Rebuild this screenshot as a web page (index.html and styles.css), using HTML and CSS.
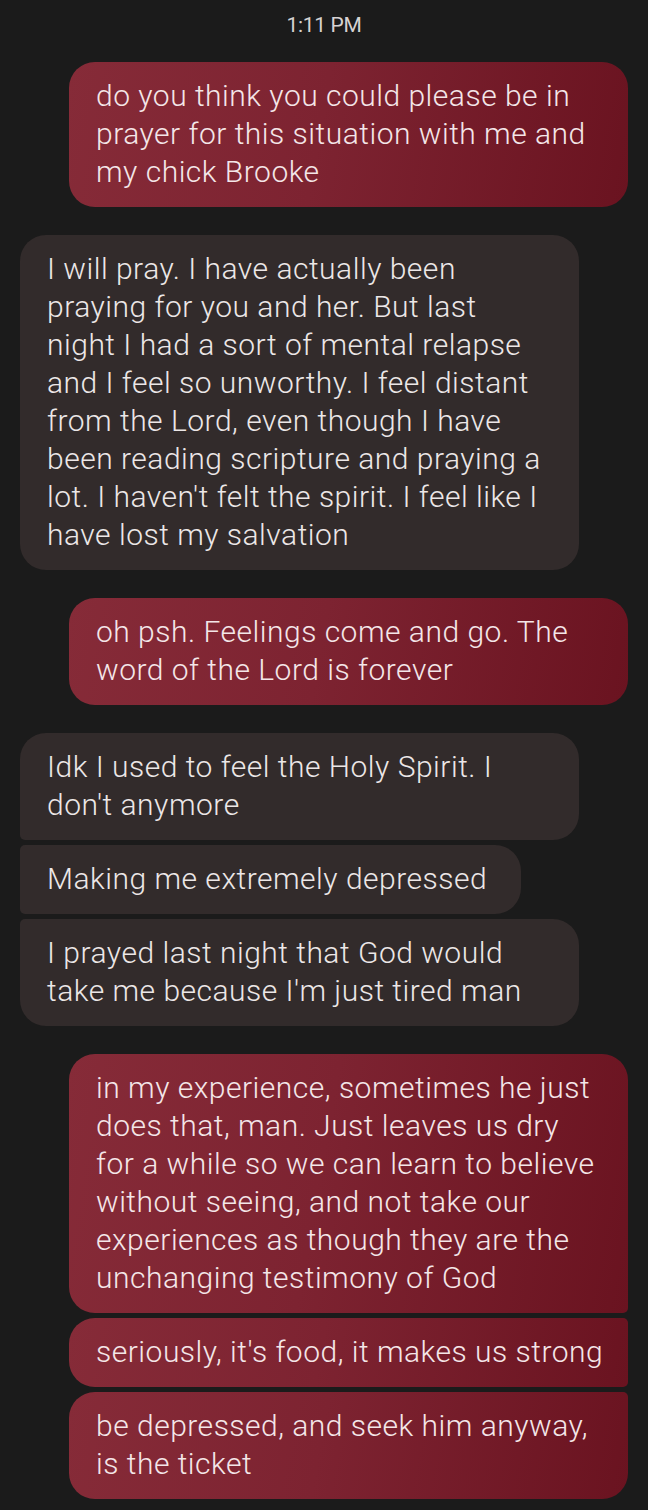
FILE: index.html
```html
<!DOCTYPE html>
<html>
<head>
<meta charset="utf-8">
<link rel="stylesheet" href="styles.css">
</head>
<body>
<main class="thread">
  <div class="time">1:11 PM</div>

  <div class="group out">
    <div class="bubble sent single">do you think you could please be in<br>prayer for this situation with me and<br>my chick Brooke</div>
  </div>

  <div class="group in">
    <div class="bubble recv single">I will pray. I have actually been<br>praying for you and her. But last<br>night I had a sort of mental relapse<br>and I feel so unworthy. I feel distant<br>from the Lord, even though I have<br>been reading scripture and praying a<br>lot. I haven't felt the spirit. I feel like I<br>have lost my salvation</div>
  </div>

  <div class="group out">
    <div class="bubble sent single">oh psh. Feelings come and go. The<br>word of the Lord is forever</div>
  </div>

  <div class="group in">
    <div class="bubble recv first">Idk I used to feel the Holy Spirit. I<br>don't anymore</div>
    <div class="bubble recv middle fit">Making me extremely depressed</div>
    <div class="bubble recv last">I prayed last night that God would<br>take me because I'm just tired man</div>
  </div>

  <div class="group out">
    <div class="bubble sent first">in my experience, sometimes he just<br>does that, man. Just leaves us dry<br>for a while so we can learn to believe<br>without seeing, and not take our<br>experiences as though they are the<br>unchanging testimony of God</div>
    <div class="bubble sent middle">seriously, it's food, it makes us strong</div>
    <div class="bubble sent last">be depressed, and seek him anyway,<br>is the ticket</div>
  </div>
</main>
</body>
</html>
```

FILE: styles.css
```css
html, body {
  margin: 0;
  padding: 0;
  background: #1b1b1b;
}

.thread {
  display: flex;
  flex-direction: column;
  padding: 0 20px 12px 20px;
  font-family: Roboto, "Noto Sans", sans-serif;
}

.time {
  height: 34px;
  padding-top: 8px;
  text-align: center;
  font-size: 21px;
  line-height: 34px;
  color: #d6d2d2;
  letter-spacing: -0.3px;
}

.group {
  display: flex;
  flex-direction: column;
  gap: 5px;
  margin-top: 28px;
}

.group:nth-child(2) {
  margin-top: 20px;
}

.group.out {
  align-items: flex-end;
}

.group.in {
  align-items: flex-start;
}

.bubble {
  box-sizing: border-box;
  width: 559px;
  padding: 15px 27px 16px 27px;
  font-size: 30px;
  font-weight: 300;
  line-height: 38px;
  white-space: nowrap;
  letter-spacing: 0.5px;
  border-radius: 26px;
}

.bubble.fit {
  width: auto;
  padding-right: 34px;
}

.sent {
  color: #f4e6e8;
  background: linear-gradient(100deg, #862b38 0%, #7d2331 45%, #6a1320 100%);
}

.recv {
  color: #ece7e7;
  background: #322b2b;
}

.recv.first { border-bottom-left-radius: 5px; }
.recv.middle { border-top-left-radius: 5px; border-bottom-left-radius: 5px; }
.recv.last { border-top-left-radius: 5px; }

.sent.first { border-bottom-right-radius: 5px; }
.sent.middle { border-top-right-radius: 5px; border-bottom-right-radius: 5px; }
.sent.last { border-top-right-radius: 5px; }
```
